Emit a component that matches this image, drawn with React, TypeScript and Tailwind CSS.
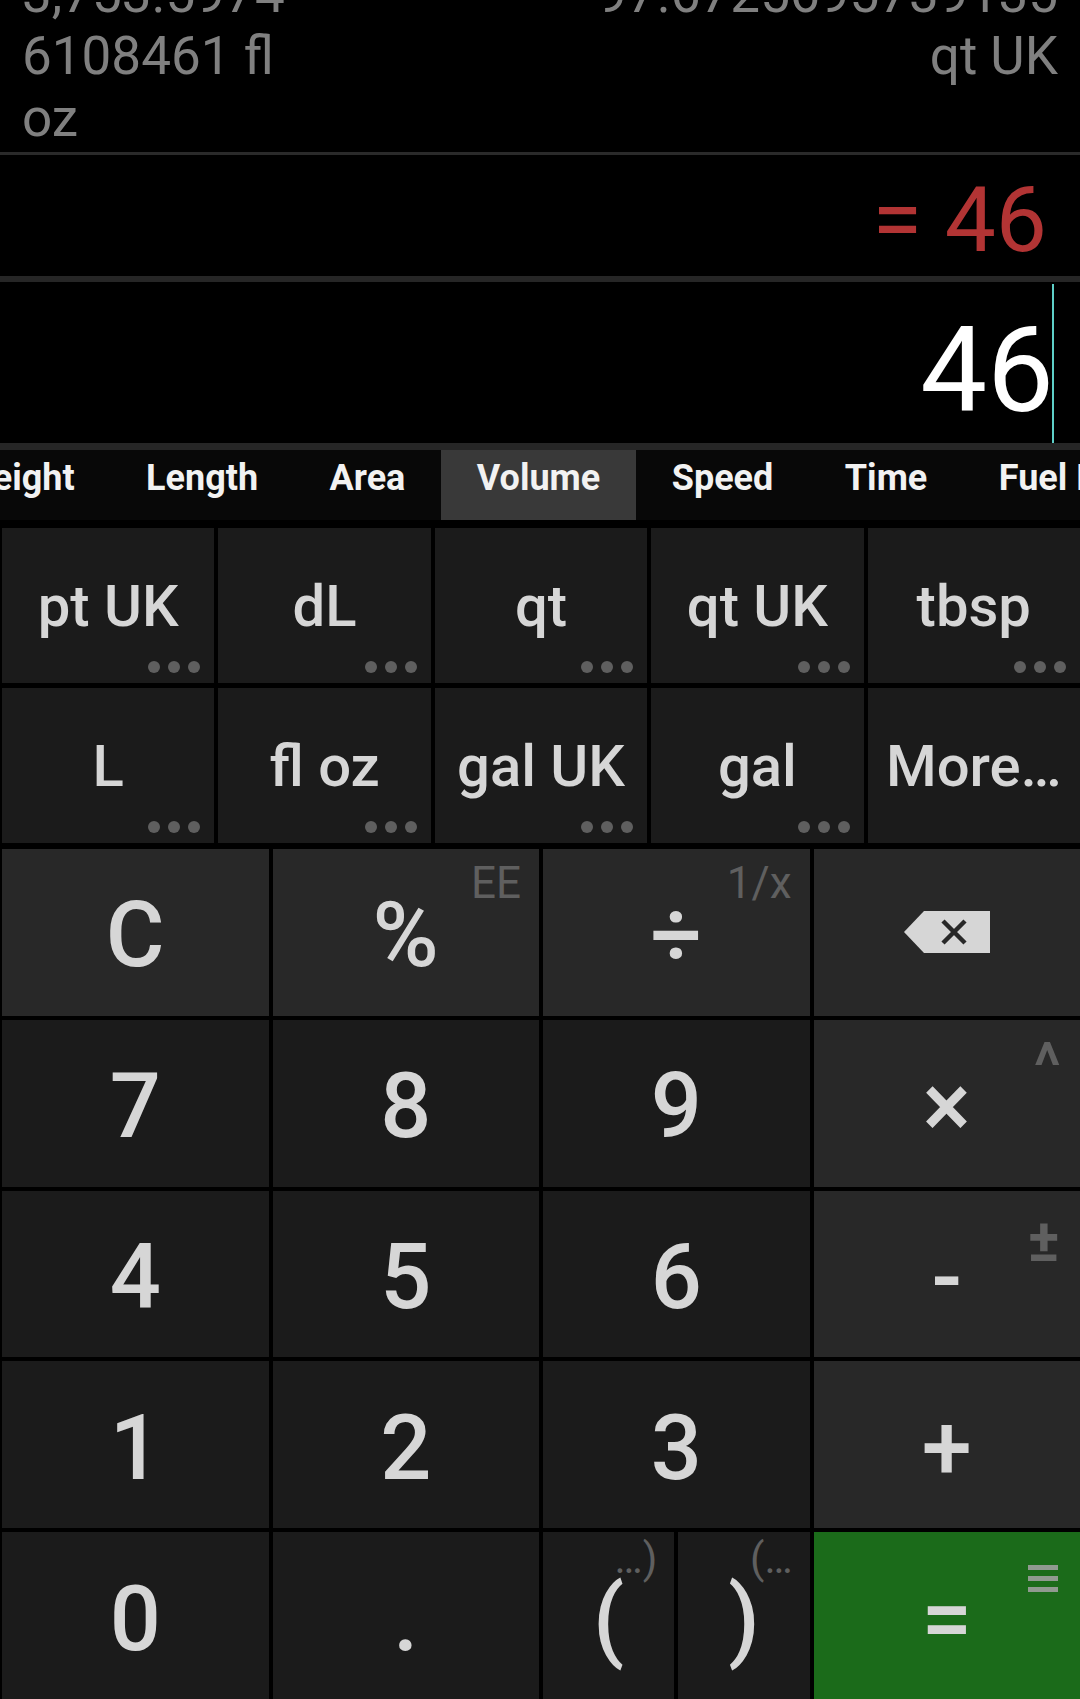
import React from "react";
import clsx from "clsx";

const tabs = [
  { label: "Weight" },
  { label: "Length" },
  { label: "Area" },
  { label: "Volume", active: true },
  { label: "Speed" },
  { label: "Time" },
  { label: "Fuel Economy" },
];

const units = [
  { label: "pt UK", more: true },
  { label: "dL", more: true },
  { label: "qt", more: true },
  { label: "qt UK", more: true },
  { label: "tbsp", more: true },
  { label: "L", more: true },
  { label: "fl oz", more: true },
  { label: "gal UK", more: true },
  { label: "gal", more: true },
  { label: "More…", more: false },
];

const History = () => (
  <div className="flex h-[152px] flex-col justify-end overflow-hidden px-[22px] pb-[3px] text-[53px] leading-[62px] text-[#808080]">
    <div className="flex items-start justify-between">
      <p className="w-[280px] [overflow-wrap:anywhere]">3,753.59746108461 fl oz</p>
      <p className="w-[470px] text-right [overflow-wrap:anywhere]">97.6725695739135 qt UK</p>
    </div>
  </div>
);

const Tabs = () => (
  <div className="h-[70px] overflow-hidden bg-[#080808]">
    <div className="ml-[-74px] flex h-full whitespace-nowrap">
      {tabs.map((t) => (
        <div
          key={t.label}
          className={clsx(
            "shrink-0 px-[35.75px] pt-[10px] text-[36px] font-bold leading-none text-[#f2f2f2]",
            t.active && "bg-[#393939]"
          )}
        >
          {t.label}
        </div>
      ))}
    </div>
  </div>
);

const UnitKey = ({ label, more }: { label: string; more: boolean }) => (
  <div className="relative flex items-center justify-center bg-[#1b1b1b] text-[58px] font-medium leading-none text-[#d6d6d6]">
    {label}
    {more && (
      <div className="absolute bottom-[10px] right-[14px] flex gap-[8px]">
        <span className="size-[12px] rounded-full bg-[#5f5f5f]" />
        <span className="size-[12px] rounded-full bg-[#5f5f5f]" />
        <span className="size-[12px] rounded-full bg-[#5f5f5f]" />
      </div>
    )}
  </div>
);

type KeyProps = {
  label?: React.ReactNode;
  light?: boolean;
  green?: boolean;
  children?: React.ReactNode;
};

const Key = ({ label, light, green, children }: KeyProps) => (
  <div
    className={clsx(
      "relative flex items-center justify-center pt-[8px] text-[90px] font-medium leading-none text-[#d6d6d6]",
      green ? "bg-[#1b6b1a]" : light ? "bg-[#282828]" : "bg-[#1b1b1b]"
    )}
  >
    {label}
    {children}
  </div>
);

const Backspace = () => (
  <svg width="86" height="42" viewBox="0 0 86 42" className="mb-[8px]">
    <polygon points="0,21 20,0 86,0 86,42 20,42" fill="#d6d6d6" />
    <path d="M39 10 L61 32 M61 10 L39 32" stroke="#282828" strokeWidth="4.5" />
  </svg>
);

const MenuBars = () => (
  <svg width="30" height="27" viewBox="0 0 30 27" className="absolute right-[22px] top-[33px]">
    <rect x="0" y="0" width="30" height="5" fill="#909a90" />
    <rect x="0" y="11" width="30" height="5" fill="#909a90" />
    <rect x="0" y="22" width="30" height="5" fill="#909a90" />
  </svg>
);

const CalcGrid = () => (
  <div className="grid h-[850px] grid-cols-4 grid-rows-5 gap-[4px] pl-[2px]">
    <Key label="C" light />
    <Key label="%" light>
      <span className="absolute right-[18px] top-[12px] text-[44px] font-normal text-[#5f5f5f]">EE</span>
    </Key>
    <Key label="÷" light>
      <span className="absolute right-[18px] top-[12px] text-[44px] font-normal text-[#5f5f5f]">1/x</span>
    </Key>
    <Key light>
      <Backspace />
    </Key>

    <Key label="7" />
    <Key label="8" />
    <Key label="9" />
    <Key label="×" light>
      <span className="absolute right-[19px] top-[15px] text-[64px] font-medium text-[#5f5f5f]">^</span>
    </Key>

    <Key label="4" />
    <Key label="5" />
    <Key label="6" />
    <Key label="-" light>
      <span className="absolute right-[20px] top-[20px] text-[60px] font-bold text-[#5f5f5f]">±</span>
    </Key>

    <Key label="1" />
    <Key label="2" />
    <Key label="3" />
    <Key label="+" light />

    <Key label="0" />
    <Key label="." />
    <div className="grid grid-cols-2 gap-[4px]">
      <Key label="(">
        <span className="absolute right-[17px] top-[6px] text-[42px] font-normal text-[#5f5f5f]">…)</span>
      </Key>
      <Key label=")">
        <span className="absolute right-[17px] top-[6px] text-[42px] font-normal text-[#5f5f5f]">(…</span>
      </Key>
    </div>
    <Key label="=" green>
      <MenuBars />
    </Key>
  </div>
);

export default function App() {
  return (
    <div className="flex h-[1699px] w-[1080px] flex-col overflow-hidden bg-black [font-family:Roboto,'Noto_Sans',sans-serif]">
      <History />
      <div className="h-[3px] shrink-0 bg-[#2a2a2a]" />
      <div className="h-[121px] shrink-0 pr-[33px] pt-[20px] text-right text-[91px] leading-none text-[#b23434]">
        = 46
      </div>
      <div className="h-[6px] shrink-0 bg-[#262626]" />
      <div className="flex h-[161px] shrink-0 justify-end pr-[26px]">
        <span className="mr-[-2px] pt-[29px] text-[119px] leading-none text-white">46</span>
        <span className="mt-[2px] w-[2px] bg-[#5ecfc7]" />
      </div>
      <div className="h-[7px] shrink-0 bg-[#262626]" />
      <Tabs />
      <div className="h-[8px] shrink-0" />
      <div className="grid h-[315px] shrink-0 grid-cols-5 grid-rows-2 gap-x-[4px] gap-y-[5px] pl-[2px]">
        {units.map((u) => (
          <UnitKey key={u.label} label={u.label} more={u.more} />
        ))}
      </div>
      <div className="h-[6px] shrink-0" />
      <CalcGrid />
    </div>
  );
}
